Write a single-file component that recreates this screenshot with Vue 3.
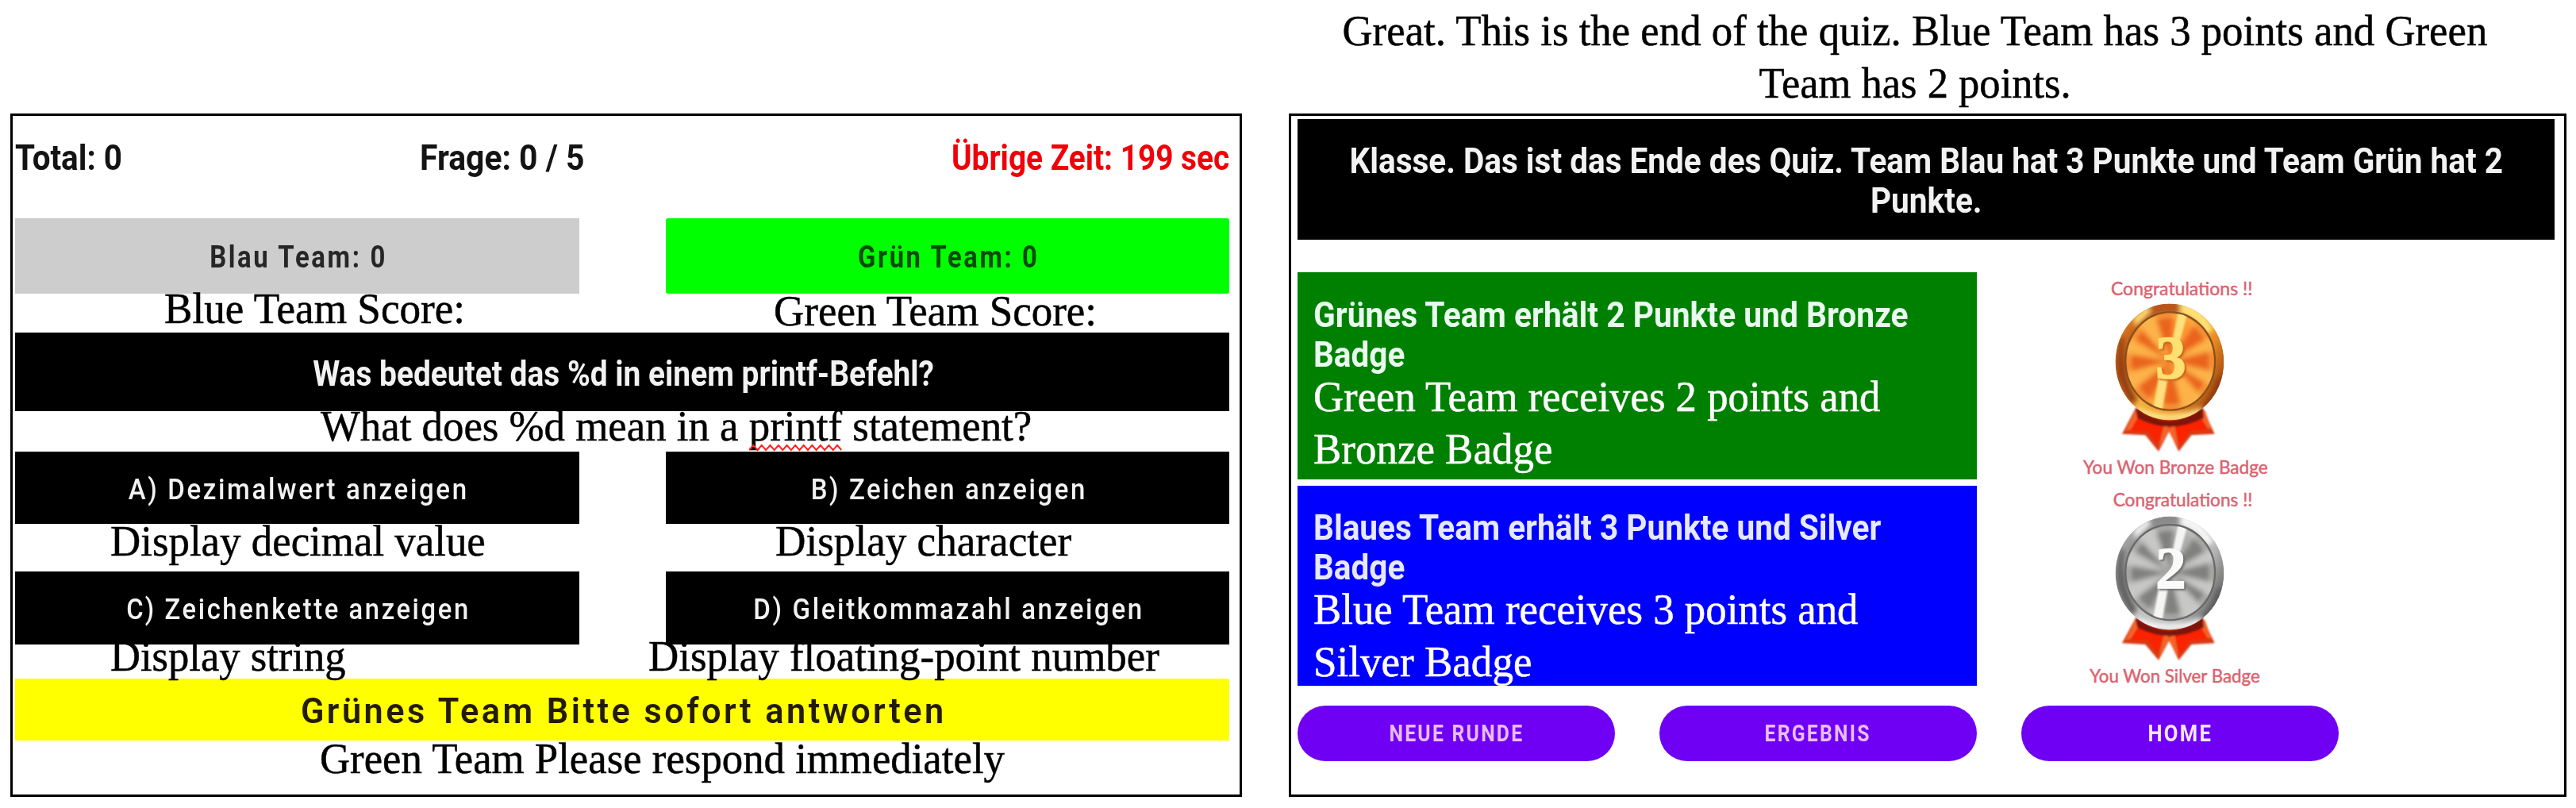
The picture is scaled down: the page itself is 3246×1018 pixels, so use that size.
<script setup>
// Squeezes or stretches a line of text horizontally to a given width in px.
const vFit = {
  mounted(el, { value }) {
    el.style.transform = `scaleX(${value / el.offsetWidth})`
  },
}

const answers = [
  [
    { text: 'A) Dezimalwert anzeigen', w: 432 },
    { text: 'B) Zeichen anzeigen', w: 351 },
  ],
  [
    { text: 'C) Zeichenkette anzeigen', w: 436 },
    { text: 'D) Gleitkommazahl anzeigen', w: 495 },
  ],
]

const notes = [
  { text: 'Blue Team Score:', x: 207, y: 407, w: 379 },
  { text: 'Green Team Score:', x: 975, y: 410, w: 407 },
  { text: 'Display decimal value', x: 139, y: 700, w: 473 },
  { text: 'Display character', x: 977, y: 700, w: 373 },
  { text: 'Display string', x: 139, y: 845, w: 297 },
  { text: 'Display floating-point number', x: 817, y: 845, w: 644 },
  { text: 'Green Team Please respond immediately', x: 403, y: 974, w: 863 },
]

const cards = [
  {
    kind: 'green',
    title: [['Grünes Team erhält 2 Punkte und Bronze', 750], ['Badge', 115]],
    note: [['Green Team receives 2 points and', 714], ['Bronze Badge', 301]],
  },
  {
    kind: 'blue',
    title: [['Blaues Team erhält 3 Punkte und Silver', 715], ['Badge', 115]],
    note: [['Blue Team receives 3 points and', 687], ['Silver Badge', 275]],
  },
]

const medals = [
  {
    id: 'bronze', digit: '3', label: 'You Won Bronze Badge',
    hello: [300, 125, 535], foot: [195, 802, 698], move: 'translate(0 0)',
    rim: ['#b8541a', '#ffe27a', '#e88a22', '#8f3a0c', '#f5b040', '#ffe68a'],
    edge: '#86501a', face: '#fb9a34', dark: '#ea641a', light: '#fdb348', shine: '#ffe07c', num: '#ffe070', shade: '#c8641c',
  },
  {
    id: 'silver', digit: '2', label: 'You Won Silver Badge',
    hello: [308, 115, 527], foot: [220, 780, 643], move: 'translate(0 -1) scale(1 0.972)',
    rim: ['#8a8a8a', '#f6f6f6', '#b4b4b4', '#5c5c5c', '#c4c4c4', '#f4f4f4'],
    edge: '#696969', face: '#b0b0ae', dark: '#80807e', light: '#c8c8c6', shine: '#f5f5f5', num: '#fafafa', shade: '#6e6e6e',
  },
]

// Radial wedges of the brushed medal face.
const wedge = (deg, half) => {
  const p = (d) => {
    const r = (d * Math.PI) / 180
    return `${524 + 190 * Math.sin(r)} ${375 - 205 * Math.cos(r)}`
  }
  return `M524 375L${p(deg - half)}L${p(deg + half)}Z`
}
const darkWedges = [[-8, 12], [48, 12], [90, 13], [128, 8], [178, 12], [222, 12], [268, 11], [308, 8]]
const lightWedges = [[-32, 12], [70, 8], [110, 9], [150, 13], [245, 10], [288, 8]]

const buttons = [
  { text: 'NEUE RUNDE', w: 170 },
  { text: 'ERGEBNIS', w: 134 },
  { text: 'HOME', w: 82, bright: true },
]
</script>

<template>
  <main class="page">
    <section class="quiz panel">
      <div class="stats">
        <span v-fit="135" class="t left">Total: 0</span>
        <span v-fit="207" class="t left">Frage: 0 / 5</span>
        <span v-fit="350" class="t right time">Übrige Zeit: 199 sec</span>
      </div>
      <div class="pair scores">
        <div class="bar grey"><span v-fit="226" class="t">Blau Team: 0</span></div>
        <div class="bar lime"><span v-fit="231" class="t">Grün Team: 0</span></div>
      </div>
      <div class="bar question"><span v-fit="785" class="t">Was bedeutet das %d in einem printf-Befehl?</span></div>
      <div v-for="(row, i) in answers" :key="i" class="pair answers">
        <div v-for="a in row" :key="a.text" class="bar"><span v-fit="a.w" class="t">{{ a.text }}</span></div>
      </div>
      <div class="bar prompt"><span v-fit="817" class="t">Grünes Team Bitte sofort antworten</span></div>
    </section>

    <span
      v-for="n in notes" :key="n.text" v-fit="n.w" class="note over"
      :style="{ left: n.x + 'px', top: n.y - 51 + 'px' }"
    >{{ n.text }}</span>
    <span v-fit="896" class="note over what">What does %d mean in a <span class="typo">printf<svg viewBox="0 0 122 10" preserveAspectRatio="none"><path d="M0 8l5.5-6 5.5 6 5.5-6 5.5 6 5.5-6 5.5 6 5.5-6 5.5 6 5.5-6 5.5 6 5.5-6 5.5 6 5.5-6 5.5 6 5.5-6 5.5 6 5.5-6 5.5 6 5.5-6 5.5 6 5.5-6 5.5 6" /></svg></span> statement?</span>

    <div class="side">
      <header class="note head">
        <span v-fit="1443">Great. This is the end of the quiz. Blue Team has 3 points and Green</span>
        <span v-fit="393">Team has 2 points.</span>
      </header>
      <section class="panel result">
        <div class="banner">
          <span v-fit="1454" class="t">Klasse. Das ist das Ende des Quiz. Team Blau hat 3 Punkte und Team Grün hat 2</span>
          <span v-fit="141" class="t">Punkte.</span>
        </div>
        <div class="outcome">
          <div class="cards">
            <article v-for="c in cards" :key="c.kind" class="card" :class="c.kind">
              <span v-for="l in c.title" :key="l[0]" v-fit="l[1]" class="t left">{{ l[0] }}</span>
              <div class="note sub">
                <span v-for="l in c.note" :key="l[0]" v-fit="l[1]" class="left">{{ l[0] }}</span>
              </div>
            </article>
          </div>
          <div class="medals">
            <svg v-for="m in medals" :key="m.id" class="medal" viewBox="0 0 1080 810">
              <defs>
                <linearGradient :id="m.id + '-rim'" x1="0" y1="0.2" x2="1" y2="0.75">
                  <stop offset="0" :stop-color="m.rim[2]" />
                  <stop offset="0.2" :stop-color="m.rim[0]" />
                  <stop offset="0.45" :stop-color="m.rim[4]" />
                  <stop offset="0.75" :stop-color="m.rim[2]" />
                  <stop offset="1" :stop-color="m.rim[3]" />
                </linearGradient>
                <filter :id="m.id + '-soft'" x="-20%" y="-20%" width="140%" height="140%"><feGaussianBlur stdDeviation="10" /></filter>
                <filter :id="m.id + '-fine'"><feGaussianBlur stdDeviation="3" /></filter>
                <filter :id="m.id + '-digit'"><feDropShadow dx="6" dy="6" stdDeviation="3" :flood-color="m.shade" /></filter>
                <clipPath :id="m.id + '-face'"><ellipse cx="524" cy="375" rx="166" ry="182" /></clipPath>
                <clipPath :id="m.id + '-disc'"><ellipse cx="522" cy="378" rx="205" ry="220" /></clipPath>
              </defs>
              <text class="cheer" :x="m.hello[0]" :y="m.hello[1]" :textLength="m.hello[2]" lengthAdjust="spacingAndGlyphs">Congratulations !!</text>
              <g :transform="m.move">
                <g :filter="`url(#${m.id}-fine)`">
                  <path d="M392 555L342 650L430 655L480 716L520 640L556 716L604 655L692 650L648 555Z" fill="#d93a12" />
                  <path d="M408 572L372 638L440 640L476 690L500 612Z" fill="#fb2200" />
                  <path d="M636 572L664 634L598 640L562 694L538 612Z" fill="#fb2200" />
                  <path d="M392 560L355 640L376 632L410 572ZM502 610L480 706L518 640L556 706L540 612L521 630ZM632 572L655 560L680 632L664 628Z" fill="#f4642c" />
                  <path d="M392 550Q522 650 648 550L650 590Q522 655 400 590Z" fill="#7c1508" />
                </g>
                <g :clip-path="`url(#${m.id}-disc)`">
                  <ellipse cx="522" cy="378" rx="206" ry="221" :fill="`url(#${m.id}-rim)`" />
                  <g :filter="`url(#${m.id}-soft)`">
                    <path d="M450 150H562V195H440Z" :fill="m.rim[0]" />
                    <path d="M562 150Q650 165 690 260L655 270Q620 205 562 195Z" :fill="m.rim[1]" />
                    <path d="M385 210L440 165L450 190L390 245Z" :fill="m.rim[1]" />
                    <path d="M350 290Q330 420 400 520L375 540Q300 420 335 280Z" :fill="m.rim[3]" />
                    <path d="M700 440Q680 520 640 545L670 560Q720 500 725 430Z" :fill="m.rim[3]" />
                    <path d="M400 550Q522 600 640 550V600H400Z" :fill="m.rim[5]" />
                  </g>
                </g>
                <ellipse cx="524" cy="375" rx="168" ry="184" :fill="m.face" :stroke="m.edge" stroke-width="9" />
                <g :clip-path="`url(#${m.id}-face)`">
                  <g :filter="`url(#${m.id}-soft)`">
                    <path v-for="w in lightWedges" :key="w[0]" :d="wedge(...w)" :fill="m.light" />
                    <path v-for="w in darkWedges" :key="w[0]" :d="wedge(...w)" :fill="m.dark" />
                    <ellipse cx="524" cy="375" rx="158" ry="174" fill="none" :stroke="m.light" stroke-width="12" />
                  </g>
                  <path d="M555 185H592L558 310H530ZM482 430H516L494 560H458Z" :fill="m.shine" :filter="`url(#${m.id}-fine)`" />
                </g>
                <text class="digit" x="526" y="437" :fill="m.num" :stroke="m.num" :filter="`url(#${m.id}-digit)`">{{ m.digit }}</text>
              </g>
              <text class="cheer" :x="m.foot[0]" :y="m.foot[1]" :textLength="m.foot[2]" lengthAdjust="spacingAndGlyphs">{{ m.label }}</text>
            </svg>
          </div>
        </div>
        <div class="actions">
          <button v-for="b in buttons" :key="b.text" :class="{ bright: b.bright }"><span v-fit="b.w" class="t">{{ b.text }}</span></button>
        </div>
      </section>
    </div>
  </main>
</template>

<style>
body { margin: 0; background: #fff; }
</style>

<style scoped>
.page {
  position: relative;
  display: flex;
  gap: 59px;
  width: 3246px;
  height: 1018px;
  padding-left: 13px;
  box-sizing: border-box;
  overflow: hidden;
  background: #fff;
  font-family: Roboto, "Liberation Sans", sans-serif;
}
.panel { box-sizing: border-box; border: 3px solid #000; height: 861px; }
.quiz { width: 1552px; margin-top: 143px; padding: 0 13px 0 3px; flex: none; }
.t { display: inline-block; white-space: nowrap; font-weight: 700; font-size: 44px; line-height: 50px; }
.left { transform-origin: left center; }
.right { transform-origin: right center; }

.stats {
  display: grid;
  grid-template-columns: 510px 400px 1fr;
  align-items: center;
  justify-items: start;
  height: 105px;
  margin-bottom: 24px;
  color: #141414;
}
.stats .right { justify-self: end; }
.time { color: #f00008; }
.pair { display: grid; grid-template-columns: 711px 710px; justify-content: space-between; }
.bar { display: flex; align-items: center; justify-content: center; background: #000; color: #f2f2f2; }
.scores { height: 95px; margin-bottom: 49px; }
.scores .t { font-size: 38px; letter-spacing: 0.08em; padding: 2px 0 0 3px; }
.grey { background: #cdcdcd; color: #262626; }
.lime { background: #0f0; color: #034a03; border-radius: 3px; }
.question { height: 99px; margin-bottom: 51px; }
.question .t { padding: 4px 0 0 3px; }
.answers { height: 91px; margin-bottom: 60px; }
.answers .t { font-size: 37px; font-weight: 500; letter-spacing: 0.08em; padding: 4px 0 0 3px; }
.answers + .answers { height: 92px; margin-bottom: 43px; }
.prompt { height: 78px; background: #ff0; color: #241c00; }
.prompt .t { font-size: 45px; font-weight: 600; letter-spacing: 0.08em; padding: 3px 0 0 3px; }

.note { font: 54px/66px "Liberation Serif", serif; color: #000; white-space: nowrap; -webkit-text-stroke: 0.5px currentColor; }
.over { position: absolute; transform-origin: left center; }
.what { left: 404px; top: 504px; }
.typo { position: relative; }
.typo svg { position: absolute; left: 0; top: 52px; width: 100%; height: 10px; }
.typo path { fill: none; stroke: #ff2020; stroke-width: 2; }

.side { width: 1610px; flex: none; }
.head { display: flex; flex-direction: column; align-items: center; height: 137px; padding: 6px 32px 0 0; }
.result { padding: 4px 12px 0 8px; }
.banner {
  display: flex;
  flex-direction: column;
  align-items: center;
  justify-content: center;
  height: 152px;
  padding-top: 3px;
  box-sizing: border-box;
  background: #000;
  color: #f2f2f2;
}
.outcome { display: flex; gap: 69px; margin-top: 41px; height: 521px; }
.cards { display: flex; flex-direction: column; gap: 8px; width: 856px; }
.card { display: flex; flex-direction: column; align-items: flex-start; box-sizing: border-box; padding-left: 20px; color: #e9fbef; }
.green { height: 261px; padding-top: 29px; background: #008000; }
.blue { height: 252px; padding-top: 28px; background: #00f; color: #e6e8ff; }
.card .sub { display: flex; flex-direction: column; align-items: flex-start; margin-top: -5px; color: #fff; }
.medals { display: flex; flex-direction: column; margin-top: -13px; }
.medal { display: block; width: 360px; height: 270px; overflow: visible; }
.cheer { font: 400 70px Lato, sans-serif; fill: #dc6370; stroke: #dc6370; stroke-width: 1.5; }
.digit { font: 700 230px "Liberation Serif", serif; text-anchor: middle; stroke-width: 5; }

.actions { display: flex; gap: 56px; margin-top: 25px; }
.actions button {
  display: flex;
  align-items: center;
  justify-content: center;
  width: 400px;
  height: 70px;
  padding: 0;
  border: 0;
  border-radius: 35px;
  background: #7000f3;
  color: #e8bcfb;
  font-family: inherit;
}
.actions .t { font-size: 29px; font-weight: 700; letter-spacing: 0.09em; }
.actions .bright { color: #f6e4ff; }
</style>
